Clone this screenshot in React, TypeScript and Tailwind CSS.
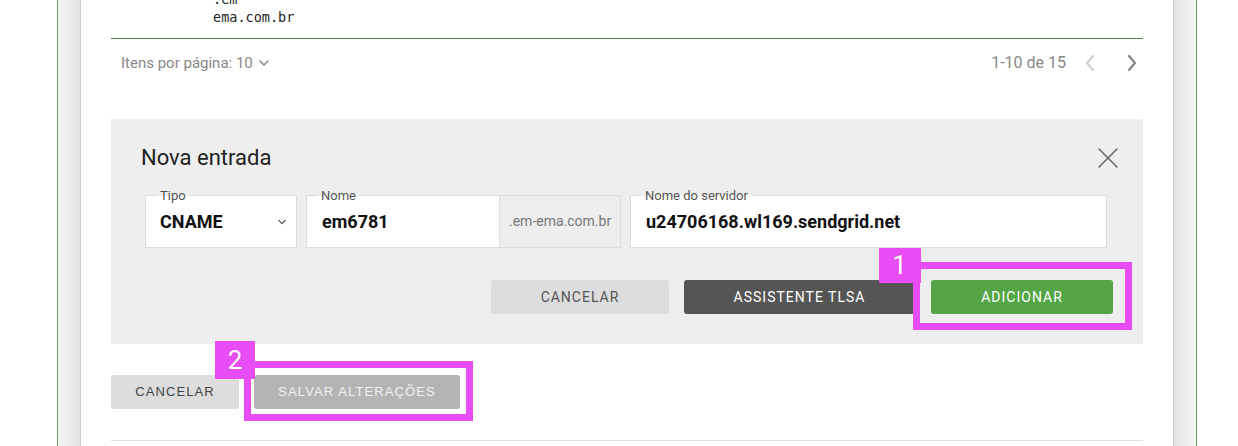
import React from "react";

function XIcon() {
  return (
    <svg width="22" height="22" viewBox="0 0 22 22" fill="none" stroke="#666" strokeWidth="1.6" strokeLinecap="round">
      <line x1="2" y1="2" x2="20" y2="20" />
      <line x1="20" y1="2" x2="2" y2="20" />
    </svg>
  );
}

function ChevronDown({ color = "#888", w = 10 }: { color?: string; w?: number }) {
  return (
    <svg width={w} height="6" viewBox="0 0 10 6" fill="none" stroke={color} strokeWidth="1.6" strokeLinecap="round" strokeLinejoin="round">
      <polyline points="1,1 5,5 9,1" />
    </svg>
  );
}

function Chevron({ dir, color }: { dir: "left" | "right"; color: string }) {
  return (
    <svg width="12" height="18" viewBox="0 0 12 18" fill="none" stroke={color} strokeWidth="2.2" strokeLinecap="round" strokeLinejoin="round">
      {dir === "left" ? <polyline points="9,2 3,9 9,16" /> : <polyline points="3,2 9,9 3,16" />}
    </svg>
  );
}

function Field({
  label,
  className,
  children,
}: {
  label: string;
  className: string;
  children: React.ReactNode;
}) {
  return (
    <div className={`relative shrink-0 h-[53px] border border-[#dcdcdc] bg-white flex ${className}`}>
      <span className="absolute -top-[8px] left-[10px] px-[4px] text-[13px] leading-[15px] text-[#555] bg-[linear-gradient(to_bottom,#eeeeee_8px,#ffffff_8px)]">
        {label}
      </span>
      {children}
    </div>
  );
}

export default function App() {
  return (
    <div className="w-[1238px] h-[446px] overflow-hidden bg-white font-['Roboto',sans-serif]">
      <div className="ml-[57px] w-[1140px] h-full flex border-x border-[#6b9a5f]">
        <div className="w-[22px] shrink-0 bg-[linear-gradient(to_right,#f6f6f6,#e2e2e2)]" />
        <div className="flex-1 min-w-0 bg-white border-x border-[#cccccc] px-[30px]">
          <div className="-mt-[10px] pl-[102px] pb-[12px] border-b border-[#4d7a48] font-['DejaVu_Sans_Mono',monospace] text-[13.5px] leading-[18px] text-[#222]">
            <div>.em</div>
            <div>ema.com.br</div>
          </div>

          <div className="h-[48px] flex items-center justify-between pl-[10px] pr-[5px] text-[#888]">
            <div className="flex items-center gap-[6px] text-[15px]">
              <span>Itens por página: 10</span>
              <ChevronDown />
            </div>
            <div className="flex items-center text-[16px]">
              <span>1-10 de 15</span>
              <span className="ml-[18px]">
                <Chevron dir="left" color="#d0d0d0" />
              </span>
              <span className="ml-[30px]">
                <Chevron dir="right" color="#888" />
              </span>
            </div>
          </div>

          <div className="mt-[32px] bg-[#eeeeee] pt-[25px] px-[30px] pb-[30px]">
            <div className="flex items-center justify-between h-[28px] -mr-[6px]">
              <h2 className="text-[22px] leading-[28px] text-[#222]">Nova entrada</h2>
              <XIcon />
            </div>

            <div className="mt-[23px] ml-[4px] flex">
              <Field label="Tipo" className="w-[152px] items-center justify-between pl-[14px] pr-[10px]">
                <span className="text-[18px] font-bold text-[#111]">CNAME</span>
                <ChevronDown color="#555" w={8} />
              </Field>
              <Field label="Nome" className="ml-[9px] w-[315px]">
                <div className="flex-1 flex items-center pl-[15px] text-[18px] font-bold text-[#111]">em6781</div>
                <div className="w-[121px] flex items-center bg-[#eeeeee] border-l border-[#dcdcdc] pl-[9px] text-[14px] text-[#777]">
                  .em-ema.com.br
                </div>
              </Field>
              <Field label="Nome do servidor" className="ml-[9px] w-[477px] items-center pl-[15px]">
                <span className="text-[18px] font-bold text-[#111]">u24706168.wl169.sendgrid.net</span>
              </Field>
            </div>

            <div className="mt-[32px] flex justify-end text-[14px] tracking-[1px] font-normal">
              <button className="w-[178px] h-[34px] rounded-[3px] bg-[#dddddd] text-[#555]">CANCELAR</button>
              <button className="ml-[15px] w-[231px] h-[34px] rounded-[3px] bg-[#555555] text-white">ASSISTENTE TLSA</button>
              <div className="relative ml-[16px]">
                <button className="w-[182px] h-[34px] rounded-[3px] bg-[#53a545] text-white">ADICIONAR</button>
                <div className="absolute -left-[18px] -top-[18px] -right-[19px] -bottom-[16px] border-[7px] border-[#e84cf4]" />
                <div className="absolute -left-[52px] -top-[32px] w-[42px] h-[35px] bg-[#e84cf4] text-white text-[26px] leading-[35px] text-center">
                  1
                </div>
              </div>
            </div>
          </div>

          <div className="mt-[31px] flex font-['Liberation_Sans',sans-serif] text-[13px] tracking-[1.1px]">
            <button className="w-[128px] h-[34px] rounded-[3px] bg-[#dddddd] text-[#444]">CANCELAR</button>
            <div className="relative ml-[15px]">
              <button className="w-[206px] h-[34px] rounded-[3px] bg-[#b4b4b4] text-[#f2f2f2]">SALVAR ALTERAÇÕES</button>
              <div className="absolute -left-[10px] -top-[14px] -right-[13px] -bottom-[12px] border-[7px] border-[#e84cf4]" />
              <div className="absolute -left-[39px] -top-[34px] w-[40px] h-[38px] bg-[#e84cf4] text-white text-[26px] leading-[38px] text-center font-['Roboto',sans-serif] tracking-normal">
                2
              </div>
            </div>
          </div>

          <div className="mt-[31px] border-t border-[#dddddd]" />
        </div>
        <div className="w-[22px] shrink-0 bg-[linear-gradient(to_left,#f6f6f6,#e2e2e2)]" />
      </div>
    </div>
  );
}
